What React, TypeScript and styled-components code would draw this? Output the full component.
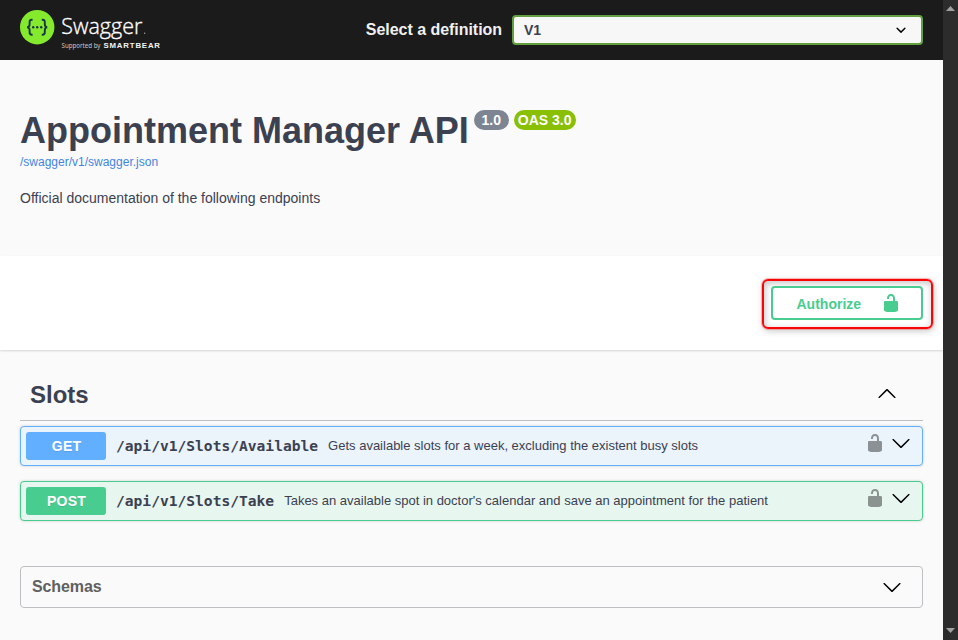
import React from 'react';
import styled, { createGlobalStyle } from 'styled-components';

const GlobalStyle = createGlobalStyle`
  *, *::before, *::after { box-sizing: border-box; }
  html, body { margin: 0; background: #fafafa; overflow: hidden; }
  body { font-family: "Liberation Sans", Arial, sans-serif; color: #3b4151; }
  h1, h2, p { margin: 0; }
`;

const Window = styled.div`
  display: flex;
  width: 958px;
  height: 640px;
  overflow: hidden;
`;

const Page = styled.div`
  display: flex;
  flex-direction: column;
  width: 943px;
  background: #fafafa;
`;

const Scrollbar = styled.div`
  display: flex;
  flex-direction: column;
  justify-content: space-between;
  width: 15px;
  height: 640px;
  background: #2c2c2c;
`;

const Topbar = styled.header`
  display: flex;
  align-items: center;
  justify-content: space-between;
  height: 60px;
  padding: 0 20px;
  background: #1b1b1b;
`;

const Definition = styled.label`
  display: flex;
  align-items: center;
  font-size: 16px;
  line-height: 20px;
  font-weight: 700;
  letter-spacing: -0.04px;
  color: #f0f0f0;
`;

const SelectBox = styled.span`
  display: flex;
  align-items: center;
  justify-content: space-between;
  width: 411px;
  height: 30px;
  margin-left: 10px;
  padding: 0 10px;
  border: 2px solid #62a03f;
  border-radius: 4px;
  background: #f7f7f7;
  color: #3b4151;
  font-size: 14px;
`;

const Info = styled.section`
  display: flex;
  flex-direction: column;
  align-items: flex-start;
  height: 196px;
  padding: 50px 20px 0;
`;

const TitleRow = styled.div`
  display: flex;
  align-items: flex-start;
`;

const Title = styled.h1`
  font-size: 36px;
  line-height: 41px;
  font-weight: 700;
  white-space: nowrap;
`;

const Badge = styled.span<{ $bg: string; $width: number }>`
  display: flex;
  justify-content: center;
  width: ${p => p.$width}px;
  height: 20px;
  margin-left: 5px;
  border-radius: 10px;
  background: ${p => p.$bg};
  color: #fff;
  font-size: 14px;
  line-height: 20px;
  font-weight: 700;
`;

const SpecLink = styled.a`
  margin-top: 4px;
  font-size: 12px;
  line-height: 14px;
  color: #4285e0;
  text-decoration: none;
`;

const Description = styled.p`
  margin-top: 20px;
  font-size: 14px;
  line-height: 18px;
`;

const SchemeBar = styled.section`
  display: flex;
  justify-content: flex-end;
  height: 94px;
  padding: 23px 10px 0;
  background: #fff;
  box-shadow: 0 1px 2px rgba(0, 0, 0, 0.15);
`;

const Highlight = styled.div`
  display: flex;
  width: 171px;
  height: 50px;
  padding: 5px 7px;
  border: 2px solid #fb0408;
  border-radius: 6px;
  box-shadow: 0 0 0 1px rgba(250, 10, 14, 0.25), 1px 2px 7px rgba(0, 0, 0, 0.22),
    inset 1px 2px 7px rgba(0, 0, 0, 0.24);
`;

const AuthorizeButton = styled.button`
  display: flex;
  align-items: center;
  justify-content: space-between;
  width: 152px;
  height: 34px;
  padding: 0 20px 0 23.5px;
  border: 2px solid #49cc90;
  border-radius: 4px;
  background: #fff;
  color: #49cc90;
  font: 700 14px "Liberation Sans", Arial, sans-serif;
`;

const ButtonLabel = styled.span`
  padding-top: 2px;
`;

const Operations = styled.main`
  display: flex;
  flex-direction: column;
  padding: 0 20px;
`;

const TagHeader = styled.div`
  display: flex;
  align-items: center;
  justify-content: space-between;
  height: 52px;
  margin: 19px 0 5px;
  padding: 0 26px 0 10px;
  border-bottom: 1px solid #bebfc3;

  svg { margin-bottom: 4px; }
`;

const TagName = styled.h2`
  font-size: 24px;
  line-height: 28px;
  font-weight: 700;
`;

const Operation = styled.div<{ $color: string; $tint: string }>`
  display: flex;
  align-items: center;
  height: 40px;
  margin-bottom: 15px;
  padding: 0 11px 0 5px;
  border: 1px solid ${p => p.$color};
  border-radius: 4px;
  background: ${p => p.$tint};
  box-shadow: 0 0 3px rgba(0, 0, 0, 0.19);
`;

const Method = styled.span<{ $color: string }>`
  width: 80px;
  height: 28px;
  padding-left: 1px;
  border-radius: 3px;
  background: ${p => p.$color};
  color: #fff;
  font-size: 14px;
  line-height: 28px;
  font-weight: 700;
  letter-spacing: 0.2px;
  text-align: center;
  text-shadow: 0 1px 0 rgba(0, 0, 0, 0.1);
`;

const Path = styled.span`
  margin-left: 10px;
  font: 700 14.6px/20px "DejaVu Sans Mono", monospace;
`;

const Summary = styled.span`
  flex: 1;
  margin-left: 10px;
  font-size: 13px;
  line-height: 16px;
`;

const RowIcons = styled.div`
  display: flex;
  gap: 6px;
  height: 28px;
  padding-top: 1px;
  color: #000;
`;

const Faded = styled.span`
  display: flex;
  opacity: 0.4;
`;

const Schemas = styled.section`
  display: flex;
  align-items: center;
  justify-content: space-between;
  height: 42px;
  margin-top: 30px;
  padding: 0 20px 0 11px;
  border: 1px solid #bebfc3;
  border-radius: 4px;
  color: #606060;
  font-size: 16px;
  font-weight: 700;
  letter-spacing: -0.1px;
`;

const Icon = styled.svg`
  display: block;
  flex: none;
  width: 20px;
  height: 20px;
  fill: currentColor;
`;

const BlackIcon = styled(Icon)`
  fill: #000;
`;

const LogoSvg = styled.svg`
  display: block;
`;

const Logo = () => (
  <LogoSvg width="150" height="60" viewBox="20 0 150 60">
    <circle cx="37.2" cy="27.2" r="17.2" fill="#85ea2d" />
    <g fill="none" stroke="#173647" strokeWidth="1.9">
      <path d="M32.6 19.7h-.8c-1.7 0-2.2.9-2.2 2.4v2.2c0 1.7-.7 2.7-2.4 2.9 1.7.2 2.4 1.2 2.4 2.9v2.2c0 1.6.5 2.4 2.2 2.4h.8" />
      <path d="M41.8 19.7h.8c1.7 0 2.2.9 2.2 2.4v2.2c0 1.7.7 2.7 2.4 2.9-1.7.2-2.4 1.2-2.4 2.9v2.2c0 1.6-.5 2.4-2.2 2.4h-.8" />
    </g>
    <g fill="#173647">
      <circle cx="33.2" cy="27.2" r="1.2" />
      <circle cx="37.2" cy="27.2" r="1.2" />
      <circle cx="41.2" cy="27.2" r="1.2" />
    </g>
    <text x="61.3" y="34" fill="#fff" stroke="#fff" strokeWidth=".35" fontFamily="Open Sans, sans-serif" fontWeight="300" fontSize="22.5" textLength="81" lengthAdjust="spacingAndGlyphs">Swagger</text>
    <circle cx="144.7" cy="33.3" r=".7" fill="#aaa" />
    <text x="61.5" y="48" fill="#c8c8c8" fontFamily="Noto Sans, sans-serif" fontSize="6.4" textLength="39" lengthAdjust="spacingAndGlyphs">Supported by</text>
    <text x="103.5" y="48" fill="#f4f4f4" fontFamily="Liberation Sans, sans-serif" fontWeight="700" fontSize="7.8" textLength="56.5" lengthAdjust="spacing">SMARTBEAR</text>
  </LogoSvg>
);

const Unlocked = () => (
  <Icon viewBox="0 0 20 20">
    <path d="M15.8 8H14V5.6C14 2.703 12.665 1 10 1 7.334 1 6 2.703 6 5.6V6h2v-.801C8 3.754 8.797 3 10 3c1.203 0 2 .754 2 2.199V8H4c-.553 0-1 .646-1 1.199V17c0 .549.428 1.139.951 1.307l1.197.387C5.672 18.861 6.55 19 7.1 19h5.8c.549 0 1.428-.139 1.951-.307l1.196-.387c.524-.167.953-.757.953-1.306V9.199C17 8.646 16.352 8 15.8 8z" />
  </Icon>
);

const ArrowDown = () => (
  <BlackIcon viewBox="0 0 20 20">
    <path d="M17.418 6.109c.272-.268.709-.268.979 0s.271.701 0 .969l-7.908 7.83c-.27.268-.707.268-.979 0l-7.908-7.83c-.27-.268-.27-.701 0-.969.271-.268.709-.268.979 0L10 13.25l7.418-7.141z" />
  </BlackIcon>
);

const ArrowUp = () => (
  <BlackIcon viewBox="0 0 20 20">
    <path d="M17.418 14.908c.272.268.709.268.979 0s.271-.701 0-.969l-7.908-7.83c-.27-.268-.707-.268-.979 0l-7.908 7.83c-.27.268-.27.701 0 .969.271.268.709.268.979 0L10 7.767l7.418 7.141z" />
  </BlackIcon>
);

const SelectArrow = () => (
  <BlackIcon viewBox="0 0 20 20">
    <path d="M13.418 7.859a.695.695 0 01.978 0 .68.68 0 010 .969l-3.908 3.83a.697.697 0 01-.979 0l-3.908-3.83a.68.68 0 010-.969.695.695 0 01.978 0L10 11l3.418-3.141z" />
  </BlackIcon>
);

const ScrollArrow = ({ d }: { d: string }) => (
  <svg width="15" height="15" viewBox="0 0 15 15" fill="#a0a0a0">
    <path d={d} />
  </svg>
);

const operations = [
  { method: 'GET', path: '/api/v1/Slots/Available', color: '#61affe', tint: '#ebf3fb', summary: 'Gets available slots for a week, excluding the existent busy slots' },
  { method: 'POST', path: '/api/v1/Slots/Take', color: '#49cc90', tint: '#e8f6f0', summary: "Takes an available spot in doctor's calendar and save an appointment for the patient" },
];

export default function App() {
  return (
    <>
      <GlobalStyle />
      <Window>
        <Page>
          <Topbar>
            <Logo />
            <Definition>
              Select a definition
              <SelectBox>
                V1
                <SelectArrow />
              </SelectBox>
            </Definition>
          </Topbar>
          <Info>
            <TitleRow>
              <Title>Appointment Manager API</Title>
              <Badge $bg="#7d8492" $width={35}>1.0</Badge>
              <Badge $bg="#89bf04" $width={62}>OAS 3.0</Badge>
            </TitleRow>
            <SpecLink>/swagger/v1/swagger.json</SpecLink>
            <Description>Official documentation of the following endpoints</Description>
          </Info>
          <SchemeBar>
            <Highlight>
              <AuthorizeButton>
                <ButtonLabel>Authorize</ButtonLabel>
                <Unlocked />
              </AuthorizeButton>
            </Highlight>
          </SchemeBar>
          <Operations>
            <TagHeader>
              <TagName>Slots</TagName>
              <ArrowUp />
            </TagHeader>
            {operations.map(op => (
              <Operation key={op.path} $color={op.color} $tint={op.tint}>
                <Method $color={op.color}>{op.method}</Method>
                <Path>{op.path}</Path>
                <Summary>{op.summary}</Summary>
                <RowIcons>
                  <Faded><Unlocked /></Faded>
                  <ArrowDown />
                </RowIcons>
              </Operation>
            ))}
            <Schemas>
              Schemas
              <ArrowDown />
            </Schemas>
          </Operations>
        </Page>
        <Scrollbar>
          <ScrollArrow d="M7.5 6l4.5 5H3z" />
          <ScrollArrow d="M7.5 8l4.5-5H3z" />
        </Scrollbar>
      </Window>
    </>
  );
}
